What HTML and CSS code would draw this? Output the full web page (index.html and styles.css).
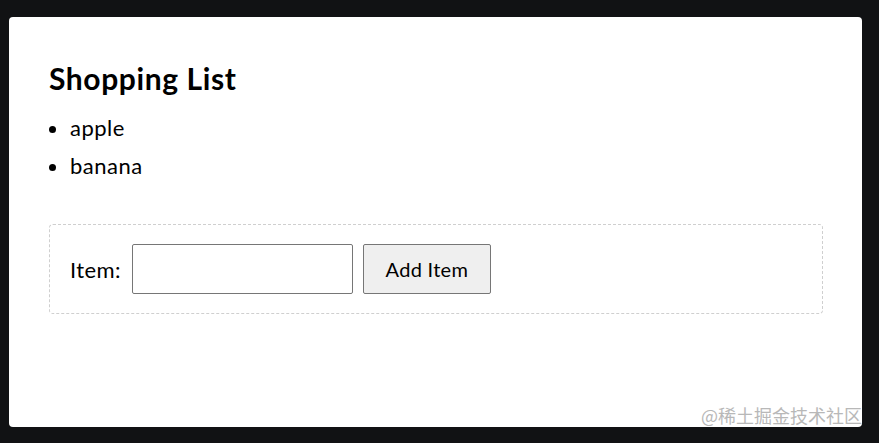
FILE: index.html
```html
<!DOCTYPE html>
<html lang="en">
<head>
<meta charset="utf-8">
<title>Shopping List</title>
<link rel="stylesheet" href="styles.css">
</head>
<body>
<main class="card">
  <h1 class="title">Shopping List</h1>
  <ul class="list">
    <li>apple</li>
    <li>banana</li>
  </ul>
  <form class="add-form">
    <label class="label" for="item">Item:</label>
    <input class="input" id="item" type="text">
    <button class="btn" type="button">Add Item</button>
  </form>
  <div class="watermark">@稀土掘金技术社区</div>
</main>
</body>
</html>
```

FILE: styles.css
```css
html, body {
  margin: 0;
  padding: 0;
  background: #111214;
}
body {
  padding: 17px 17px 16px 9px;
  font-family: Lato, "Noto Sans", sans-serif;
  color: #000;
}
.card {
  position: relative;
  box-sizing: border-box;
  width: 853px;
  height: 410px;
  background: #fff;
  border-radius: 4px;
  padding: 42px 40px 0 40px;
}
.title {
  margin: 0 0 17px 0;
  font-size: 30px;
  font-weight: 700;
  line-height: 38px;
  letter-spacing: 0.6px;
}
.list {
  margin: 0;
  padding-left: 21px;
  font-size: 22px;
  line-height: 28px;
  letter-spacing: 0.5px;
}
.list li {
  margin-bottom: 10px;
}
.add-form {
  margin-top: 44px;
  box-sizing: border-box;
  width: 774px;
  height: 90px;
  border: 1px dashed #cfcfcf;
  border-radius: 4px;
  padding: 0 20px;
  display: flex;
  align-items: center;
}
.label {
  font-size: 22px;
  letter-spacing: 0.4px;
  margin-right: 11px;
}
.input {
  box-sizing: border-box;
  width: 221px;
  height: 50px;
  border: 1px solid #767676;
  border-radius: 2px;
  margin: 0 10px 0 0;
  padding: 0 8px;
  font-size: 18px;
}
.btn {
  box-sizing: border-box;
  width: 128px;
  height: 50px;
  background: #efefef;
  border: 1px solid #767676;
  border-radius: 2px;
  font-family: Lato, "Noto Sans", sans-serif;
  font-size: 20px;
  letter-spacing: 0.3px;
  color: #000;
  padding: 0;
}
.watermark {
  position: absolute;
  right: 0;
  bottom: 0;
  font-family: "Noto Sans CJK SC", sans-serif;
  font-size: 18px;
  color: #b8b8b8;
  line-height: 24px;
}
```
